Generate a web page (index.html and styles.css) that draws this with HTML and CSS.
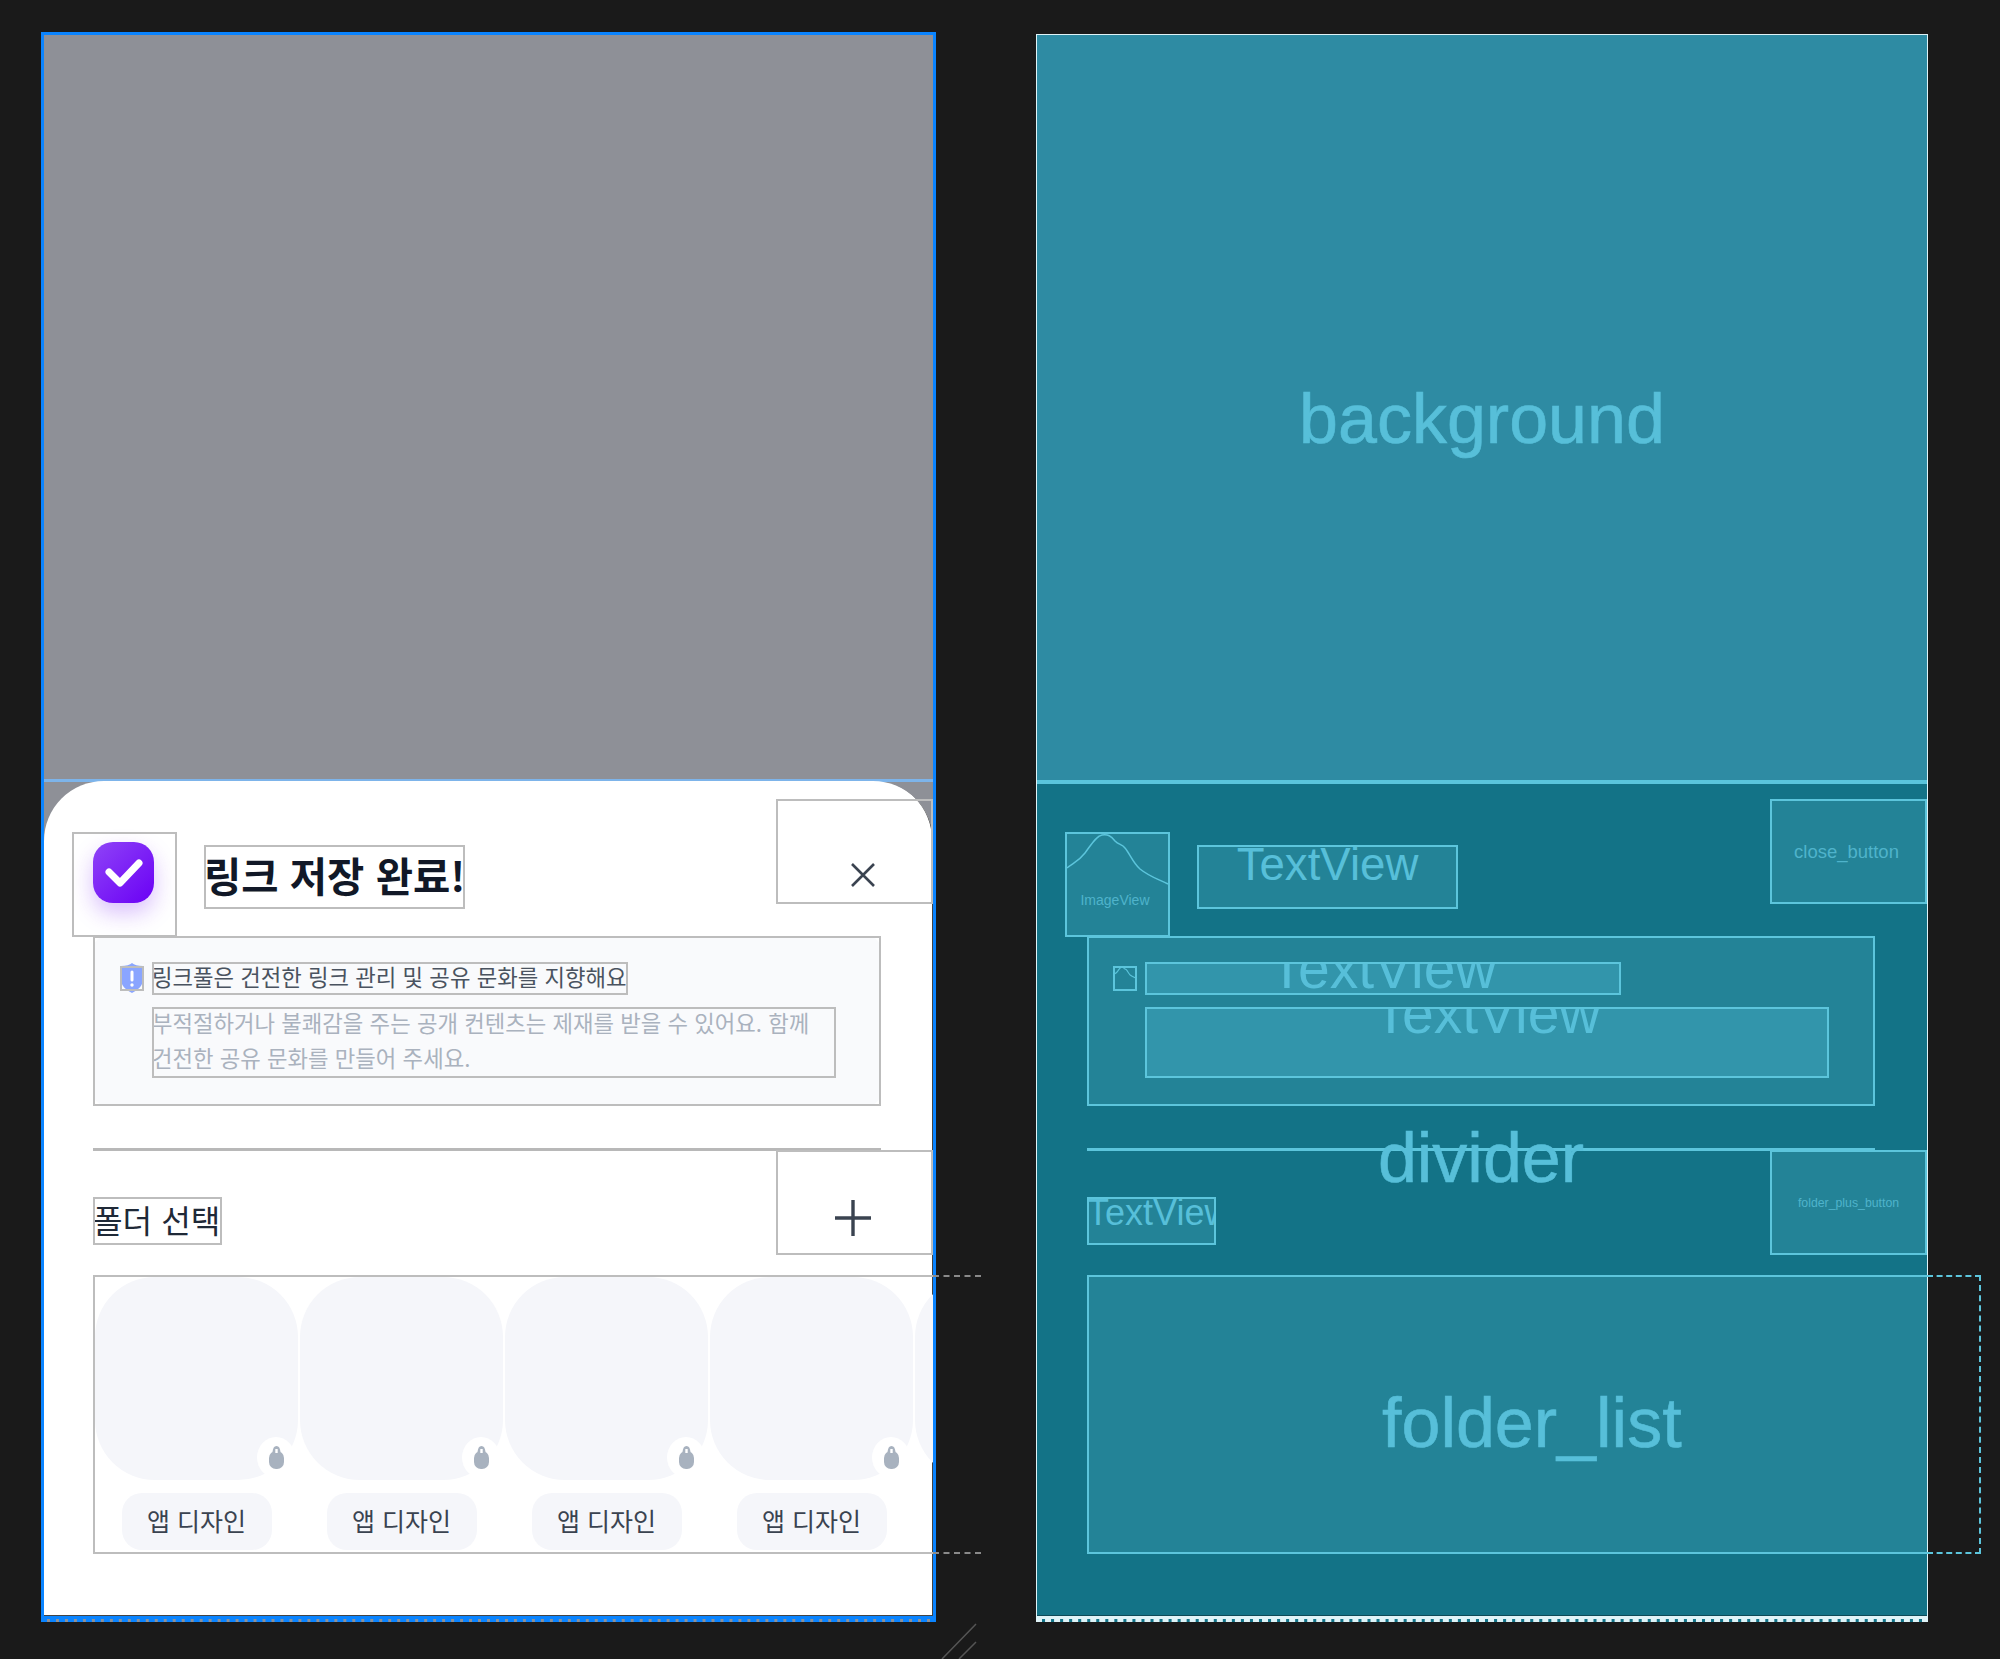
FILE: index.html
```html
<!DOCTYPE html>
<html lang="ko">
<head>
  <meta charset="UTF-8">
  <meta name="viewport" content="width=device-width, initial-scale=1.0">
  <title>Layout Editor</title>
  <link rel="stylesheet" href="styles.css">
</head>
<body>
  <div class="canvas">

    <!-- design view -->
    <div class="artboard artboard-design">
      <div class="scrim"></div>
      <div class="sheet">
        <div class="head">
          <div class="box icon-box">
            <div class="check-badge">
              <svg width="61" height="61" viewBox="0 0 61 61"><path d="M16 30l11 11 19-20" fill="none" stroke="#fff" stroke-width="7" stroke-linecap="round" stroke-linejoin="round"/></svg>
            </div>
          </div>
          <div class="box title">링크 저장 완료!</div>
          <div class="box close-box">
            <svg class="close-icon" width="26" height="26" viewBox="0 0 26 26"><path d="M2 2l22 22M24 2L2 24" stroke="#3a4350" stroke-width="2.6" fill="none"/></svg>
          </div>
        </div>

        <div class="box notice">
          <div class="notice-body">
            <div class="box info-icon">
              <svg width="24" height="30" viewBox="0 0 24 30"><path d="M12 0c2 2 6 3 11 3v13c0 7-5 11-11 14C6 27 1 23 1 16V3c5 0 9-1 11-3z" fill="#8aa5ff"/><path d="M12 9v8" stroke="#fff" stroke-width="3" stroke-linecap="round"/><circle cx="12" cy="22" r="1.7" fill="#fff"/></svg>
            </div>
            <div class="box notice-title">링크풀은 건전한 링크 관리 및 공유 문화를 지향해요</div>
            <div class="box notice-text"><div class="notice-lines">부적절하거나 불쾌감을 주는 공개 컨텐츠는 제재를 받을 수 있어요. 함께 건전한 공유 문화를 만들어 주세요.</div></div>
          </div>
        </div>

        <div class="divider"></div>

        <div class="folder-head">
          <div class="box folder-title">폴더 선택</div>
          <div class="box plus-box">
            <svg class="plus-icon" width="38" height="38" viewBox="0 0 38 38"><path d="M19 1v36M1 19h36" stroke="#3a4350" stroke-width="3.4" fill="none"/></svg>
          </div>
        </div>

        <div class="folder-wrap">
          <div class="folder-list">
            <div class="folder">
              <div class="tile"><span class="lock"><svg width="15" height="24" viewBox="0 0 15 24"><path d="M7.5 0C5 0 4 2 3.500 6h8C11 2 10 0 7.500 0z" fill="#a8b2bf"/><rect y="5" width="15" height="18" rx="7" fill="#a8b2bf"/><rect x="6.300" y="3" width="2.400" height="4" fill="#fff"/></svg></span></div>
              <div class="chip">앱 디자인</div>
            </div>
            <div class="folder">
              <div class="tile"><span class="lock"><svg width="15" height="24" viewBox="0 0 15 24"><path d="M7.5 0C5 0 4 2 3.500 6h8C11 2 10 0 7.500 0z" fill="#a8b2bf"/><rect y="5" width="15" height="18" rx="7" fill="#a8b2bf"/><rect x="6.300" y="3" width="2.400" height="4" fill="#fff"/></svg></span></div>
              <div class="chip">앱 디자인</div>
            </div>
            <div class="folder">
              <div class="tile"><span class="lock"><svg width="15" height="24" viewBox="0 0 15 24"><path d="M7.5 0C5 0 4 2 3.500 6h8C11 2 10 0 7.500 0z" fill="#a8b2bf"/><rect y="5" width="15" height="18" rx="7" fill="#a8b2bf"/><rect x="6.300" y="3" width="2.400" height="4" fill="#fff"/></svg></span></div>
              <div class="chip">앱 디자인</div>
            </div>
            <div class="folder">
              <div class="tile"><span class="lock"><svg width="15" height="24" viewBox="0 0 15 24"><path d="M7.5 0C5 0 4 2 3.500 6h8C11 2 10 0 7.500 0z" fill="#a8b2bf"/><rect y="5" width="15" height="18" rx="7" fill="#a8b2bf"/><rect x="6.300" y="3" width="2.400" height="4" fill="#fff"/></svg></span></div>
              <div class="chip">앱 디자인</div>
            </div>
            <div class="folder">
              <div class="tile"></div>
            </div>
          </div>
          <div class="list-overflow"></div>
        </div>
      </div>
    </div>

    <!-- blueprint view -->
    <div class="artboard artboard-blueprint">
      <div class="scrim"><span class="label-huge">background</span></div>
      <div class="sheet">
        <div class="head">
          <div class="box icon-box">
            <svg class="image-view" viewBox="0 0 105 105"><path d="M2 36C8 31 13 30 20 21 26 13 31 4 37 3c6-1 9 1 13 6 4 4 7 3 10 7 5 6 8 15 15 21 10 8 18 10 28 15V2H2z" fill="#238397"/><path d="M2 36C8 31 13 30 20 21 26 13 31 4 37 3c6-1 9 1 13 6 4 4 7 3 10 7 5 6 8 15 15 21 10 8 18 10 28 15" fill="none" stroke="#5cc5dc" stroke-width="1.500"/><text x="50" y="73" text-anchor="middle" class="image-view-text">ImageView</text></svg>
          </div>
          <div class="box title"><span class="label-title">TextView</span></div>
          <div class="box close-box"><span class="label-small">close_button</span></div>
        </div>

        <div class="box notice">
          <div class="notice-body">
            <div class="box info-icon">
              <svg class="image-view" viewBox="0 0 105 105"><path d="M2 36C8 31 13 30 20 21 26 13 31 4 37 3c6-1 9 1 13 6 4 4 7 3 10 7 5 6 8 15 15 21 10 8 18 10 28 15" fill="none" stroke="#5cc5dc" stroke-width="5"/></svg>
            </div>
            <div class="box notice-title"><span class="label-inner">TextView</span></div>
            <div class="box notice-text"><span class="label-inner">TextView</span></div>
          </div>
        </div>

        <div class="divider"><span class="label-divider">divider</span></div>

        <div class="folder-head">
          <div class="box folder-title"><span class="label-folder">TextView</span></div>
          <div class="box plus-box"><span class="label-tiny">folder_plus_button</span></div>
        </div>

        <div class="folder-wrap">
          <div class="folder-list"></div>
          <div class="list-overflow"></div>
          <span class="label-list">folder_list</span>
        </div>
      </div>
    </div>

    <svg class="resize-handle" width="36" height="36" viewBox="0 0 36 36"><path d="M35 1L1 36M35 19L18 36" stroke="#555" stroke-width="1.500" fill="none"/></svg>
  </div>
</body>
</html>
```

FILE: styles.css
```css
* {
  box-sizing: border-box;
}
html, body {
  margin: 0;
  height: 100%;
  background-color: #1a1a1a;
  overflow: hidden;
}
body {
  font-family: "Noto Sans CJK KR", "Noto Sans", sans-serif;
}
.canvas {
  position: relative;
  display: flex;
  align-items: flex-start;
  gap: 100px;
  height: 1659px;
  padding: 32px 0 0 41px;
}

/* artboards */
.artboard {
  position: relative;
  display: flex;
  flex-direction: column;
  height: 1590px;
  border: 3px solid #0a84ff;
  border-bottom-style: dashed;
}
.artboard-design {
  width: 895px;
  background-color: #8e9097;
}
.artboard-blueprint {
  width: 892px;
  height: 1588px;
  margin-top: 2px;
  border: 1px solid #dff3f7;
  border-bottom: 3px dashed #dff3f7;
  background-color: #137387;
  font-family: "Liberation Sans", Arial, sans-serif;
  color: #57bfd9;
}
.scrim {
  flex: none;
  height: 747px;
  border-bottom: 3px solid #7db4ea;
}
.artboard-blueprint .scrim {
  display: flex;
  align-items: center;
  justify-content: center;
  height: 749px;
  padding-top: 22px;
  border-bottom: 4px solid #5ac5dc;
  background-color: #2e8ba3;
}
.sheet {
  flex: 1;
  margin-top: -1px;
  border-bottom: 3px solid #0a84ff;
  border-radius: 60px 60px 0 0;
  background-color: #fff;
  box-shadow: inset -1px -1px 0 #444;
}
.artboard-blueprint .sheet {
  margin-top: -3px;
  border-bottom-color: #dff3f7;
  border-radius: 0;
  background-color: transparent;
  box-shadow: inset 0 -1px 0 #0d4a57;
}

/* bounds drawn by the editor */
.box {
  outline: 2px solid #bdbdbd;
  outline-offset: -2px;
}
.artboard-blueprint .box {
  outline-color: #5cc5dc;
  background-color: #238397;
}

/* header */
.head {
  display: flex;
  align-items: flex-start;
  height: 155px;
}
.icon-box {
  flex: none;
  display: flex;
  justify-content: center;
  width: 105px;
  height: 105px;
  margin: 51px 0 0 28px;
  padding: 10px 2px 0 0;
}
.artboard-blueprint .icon-box {
  padding: 0;
}
.check-badge {
  width: 61px;
  height: 61px;
  border-radius: 20px;
  background: linear-gradient(135deg, #8f44f7, #6a00f5);
  box-shadow: 0 10px 22px rgba(120, 30, 245, 0.28);
}
.check-badge svg {
  display: block;
}
.image-view {
  display: block;
  width: 100%;
  height: 100%;
}
.image-view-text {
  font-size: 14px;
  fill: #4fb3cb;
}
.title {
  width: 261px;
  height: 64px;
  margin: 64px 0 0 27px;
  font-size: 40.5px;
  font-weight: 700;
  line-height: 60px;
  white-space: nowrap;
  color: #111827;
}
.close-box {
  position: relative;
  flex: none;
  width: 157px;
  height: 105px;
  margin: 18px 0 0 auto;
}
.close-icon {
  position: absolute;
  left: 74px;
  top: 63px;
}

/* notice */
.notice {
  width: 788px;
  height: 170px;
  margin-left: 49px;
}
.notice-body {
  display: grid;
  grid-template-columns: 24px 684px;
  column-gap: 8px;
  row-gap: 12px;
  align-content: start;
  height: 100%;
  padding: 26px 0 0 27px;
  border-radius: 14px;
  background-color: #f9fafc;
}
.artboard-blueprint .notice {
  margin-left: 50px;
}
.artboard-blueprint .notice-body {
  padding-left: 26px;
  background-color: transparent;
}
.info-icon {
  width: 24px;
  height: 25px;
  margin-top: 4px;
}
.info-icon svg {
  display: block;
  margin-top: -3px;
}
.artboard-blueprint .info-icon svg {
  margin: 0;
}
.artboard-blueprint .info-icon {
  background-color: transparent;
}
.notice-title {
  width: 476px;
  height: 33px;
  font-size: 22.3px;
  line-height: 28px;
  white-space: nowrap;
  color: #4a5360;
}
.notice-text {
  grid-column: 2;
  height: 71px;
  font-size: 22.3px;
  line-height: 34.5px;
  color: #aab2be;
}
.notice-lines {
  margin-top: -2px;
}
.artboard-blueprint .notice-title,
.artboard-blueprint .notice-text {
  overflow: hidden;
  text-align: center;
  background-color: #3295ab;
  color: #57bfd9;
}

/* divider */
.divider {
  position: relative;
  display: flex;
  justify-content: center;
  width: 788px;
  height: 3px;
  margin: 42px 0 0 49px;
  background-color: #b8b8b8;
}
.artboard-blueprint .divider {
  margin-left: 50px;
  background-color: #5cc5dc;
}

/* folder section */
.folder-head {
  display: flex;
  align-items: flex-start;
  height: 105px;
  margin: -1px 0 0 49px;
}
.artboard-blueprint .folder-head {
  margin-left: 50px;
}
.folder-title {
  width: 129px;
  height: 48px;
  margin-top: 47px;
  overflow: hidden;
  font-size: 32.2px;
  line-height: 44px;
  white-space: nowrap;
  color: #1f2937;
}
.plus-box {
  position: relative;
  flex: none;
  width: 157px;
  height: 105px;
  margin-left: auto;
}
.plus-icon {
  position: absolute;
  left: 58px;
  top: 49px;
}
.folder-wrap {
  position: relative;
  height: 279px;
  margin: 20px 0 0 49px;
}
.artboard-blueprint .folder-wrap {
  margin-left: 50px;
}
.folder-list {
  display: flex;
  gap: 2px;
  height: 100%;
  overflow: hidden;
  border: 2px solid #bdbdbd;
  border-right: none;
}
.artboard-blueprint .folder-list {
  border-color: #5cc5dc;
  background-color: #238397;
}
.folder {
  flex: none;
  display: flex;
  flex-direction: column;
  align-items: center;
  width: 203px;
}
.tile {
  position: relative;
  width: 100%;
  height: 203px;
  flex: none;
  border-radius: 60px;
  background-color: #f5f6fa;
}
.lock {
  position: absolute;
  right: 3px;
  bottom: 2px;
  display: flex;
  align-items: center;
  justify-content: center;
  width: 38px;
  height: 41px;
  border-radius: 50%;
  background-color: #fff;
}
.chip {
  flex: none;
  width: 150px;
  height: 57px;
  margin-top: 13px;
  border-radius: 20px;
  background-color: #f5f6fa;
  font-size: 25px;
  line-height: 55px;
  text-align: center;
  color: #3a4350;
}
.list-overflow {
  position: absolute;
  left: 100%;
  top: 0;
  width: 48px;
  height: 100%;
  border-top: 2px dashed #8a8a8a;
  border-bottom: 2px dashed #8a8a8a;
}
.artboard-blueprint .list-overflow {
  width: 54px;
  border: 2px dashed #5cc5dc;
  border-left: none;
}

/* blueprint labels */
.label-huge,
.label-divider,
.label-list {
  font-size: 70px;
  -webkit-text-stroke: 0.6px #57bfd9;
}
.label-divider {
  position: absolute;
  top: -22px;
  line-height: 65px;
}
.label-list {
  position: absolute;
  left: 295px;
  top: 116px;
  line-height: 65px;
}
.label-title {
  display: block;
  font-size: 45.6px;
  font-weight: 400;
  line-height: 40px;
  text-align: center;
  color: #57bfd9;
}
.artboard-blueprint .title {
  overflow: hidden;
}
.label-inner {
  display: block;
  font-size: 57px;
  line-height: 12.5px;
}
.label-folder {
  font-size: 36px;
  line-height: 31px;
  display: block;
}
.artboard-blueprint .folder-title {
  color: #57bfd9;
}
.artboard-blueprint .close-box,
.artboard-blueprint .plus-box {
  display: flex;
  align-items: center;
  justify-content: center;
  color: #4fb3cb;
}
.artboard-blueprint .close-box {
  padding-right: 4px;
}
.label-small {
  font-size: 18.5px;
}
.label-tiny {
  font-size: 12.3px;
}
.resize-handle {
  position: absolute;
  left: 941px;
  top: 1623px;
}
```
